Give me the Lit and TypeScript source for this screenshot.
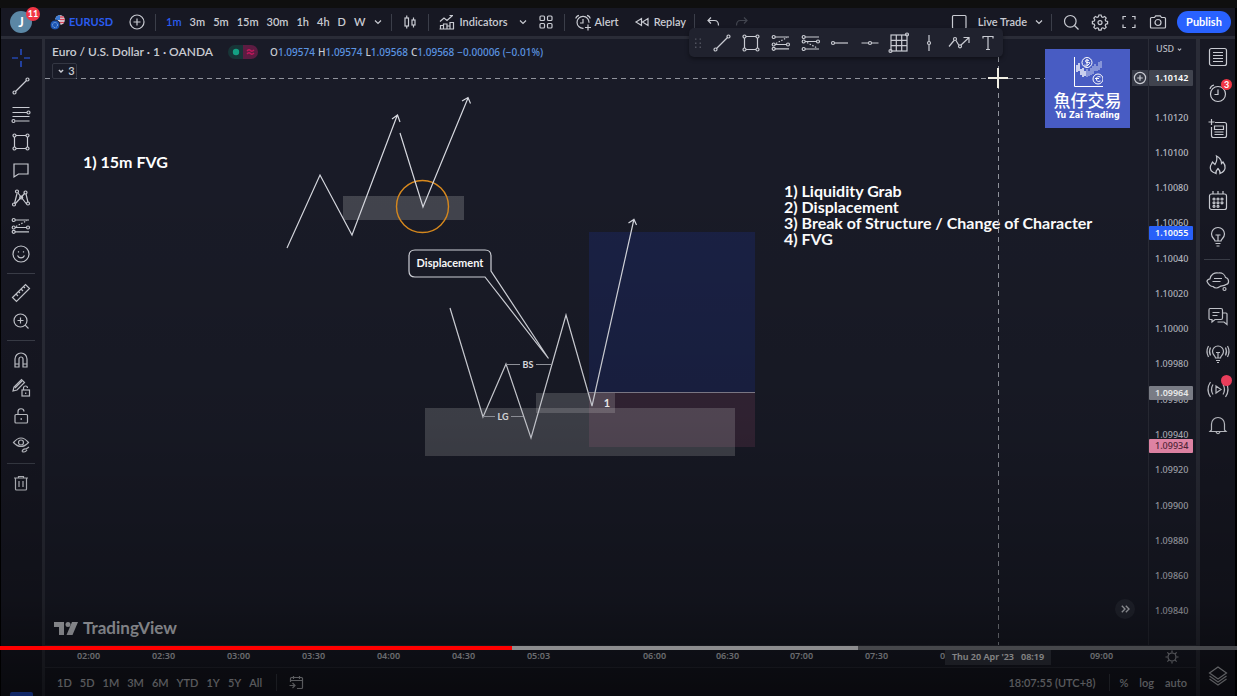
import { LitElement, html, css, svg, nothing } from "lit";
import type { SVGTemplateResult } from "lit";
import { classMap } from "lit/directives/class-map.js";

const dot = (x: number, y: number, r = 1.5) => svg`<circle cx=${x} cy=${y} r=${r} />`;

const ICONS: Record<string, SVGTemplateResult> = {
  addCircle: svg`<circle cx="10" cy="10" r="7"/><path d="M10 6.5v7M6.5 10h7"/>`,
  chevron: svg`<path d="M7 8.5l3 3 3-3"/>`,
  candles: svg`<rect x="5" y="6" width="3.5" height="8"/><path d="M6.75 3.5V6M6.75 14v2.5"/><rect x="12" y="8" width="3" height="5"/><path d="M13.5 5.500V8M13.5 13v2.500"/>`,
  indicators: svg`<path d="M3.500 17v-3.500h3V17M6.500 17v-5h3.500v5M10 17v-3h3V17M13 17v-6.500h3.500V17M2.500 17H17M3 9.500l4-3.500 3 2.500 5.500-5M12.500 3.500h3.500"/>`,
  grid: svg`<rect x="4" y="4" width="4.500" height="4.500" rx="1"/><rect x="11.500" y="4" width="4.500" height="4.500" rx="1"/><rect x="4" y="11.500" width="4.500" height="4.500" rx="1"/><rect x="11.500" y="11.500" width="4.500" height="4.500" rx="1"/>`,
  alert: svg`<path d="M10.500 16.300A6 6 0 1 1 16 10.800M10 7v4H7M2.800 6.500A4 4 0 0 1 6 3.300M14 3.300a4 4 0 0 1 3.200 3.200M15 12.500v6M12 15.500h6"/>`,
  replay: svg`<path d="M9.500 6.500v7L4 10zM16 6.500v7L10.500 10z"/>`,
  undo: svg`<path d="M8 5.500L5 8.500l3 3M5 8.500h6.500q4 0 4 5"/>`,
  redo: svg`<path d="M12 5.500l3 3-3 3M15 8.500H8.500q-4 0-4 5"/>`,
  square: svg`<rect x="3.500" y="3.500" width="13.500" height="13" rx="1"/>`,
  search: svg`<circle cx="9.300" cy="9.300" r="5.800"/><path d="M13.500 13.500l4 4"/>`,
  gear: svg`<path d="M8.900 3h2.200l.5 1.900 1.300.5 1.700-1 1.600 1.600-1 1.700.5 1.300 1.900.5v2.200l-1.900.5-.5 1.300 1 1.700-1.600 1.600-1.700-1-1.300.5-.5 1.900H8.900l-.5-1.900-1.300-.5-1.700 1-1.600-1.600 1-1.700-.5-1.300-1.900-.5V9.500L4.300 9l.5-1.300-1-1.700 1.600-1.600 1.700 1 1.300-.5z"/><circle cx="10" cy="10.600" r="2"/>`,
  fullscreen: svg`<path d="M4 7.500V4.500h3M13 4.500h3v3M16 12.500v3h-3M7 15.500H4v-3"/>`,
  camera: svg`<path d="M3.500 5.500h3l1.200-1.700h4.600l1.200 1.700h3q1 0 1 1v8.500q0 1-1 1h-13q-1 0-1-1V6.500q0-1 1-1z"/><circle cx="10" cy="10.500" r="3"/>`,
  cross: svg`<path d="M10 1v6M10 13v6M1 10h6M13 10h6"/>`,
  line: svg`<path d="M4.500 15.500l11-11"/>${dot(3.5, 16.5)}${dot(16.5, 3.5)}`,
  fib: svg`<path d="M1.500 3.500h17M1.500 8.500h14.500M1.500 12.500h17M4.500 17h14"/>${dot(17.5, 8.5)}${dot(2.5, 17)}`,
  rect: svg`<path d="M5 3.500h10M5 16.500h10M3.500 5v10M16.500 5v10"/>${dot(3.5, 3.5)}${dot(16.5, 3.5)}${dot(3.5, 16.5)}${dot(16.5, 16.5)}`,
  note: svg`<path d="M3 4h14v10H7.500L3 17z"/>`,
  pattern: svg`<path d="M3.500 15.500L6 5.500M7 5l8.500 11M4.500 15.500l9.500-10.500M15 6l2 8.500"/>${dot(3, 16.5)}${dot(6, 3.5)}${dot(10.2, 9.5)}${dot(14.5, 4.5)}${dot(17, 15.5)}`,
  forecast: svg`<path d="M4 4h14M4 11.500h12M4 15.800h14"/><path stroke-dasharray="1.500 1.500" d="M5 10.500l11-6"/>${dot(2.7, 4)}${dot(2.7, 11.5)}${dot(17, 11.5)}${dot(2.7, 15.8)}`,
  forecastDown: svg`<path d="M4 4h14M4 8.500h12M4 16h14"/><path stroke-dasharray="1.500 1.500" d="M6 9.500l10 5.500"/>${dot(2.7, 4)}${dot(2.7, 8.5)}${dot(17, 8.5)}${dot(2.7, 16)}`,
  smile: svg`<circle cx="10" cy="10" r="8"/><path d="M6.500 11.500a3.800 3.800 0 0 0 7 0M7.500 7.300v1.200M12.500 7.300v1.200"/>`,
  ruler: svg`<path d="M1.500 14.500l13-13 4 4-13 13zM5 11l2 2M7.500 8.500l1.500 1.500M10 6l2 2M12.500 3.500L14 5"/>`,
  zoomIn: svg`<circle cx="9.500" cy="9.500" r="6.500"/><path d="M14.200 14.200l3.300 3.300M9.500 6.500v6M6.500 9.500h6"/>`,
  magnet: svg`<path d="M4 17V9a6 6 0 0 1 12 0v8h-4V9a2 2 0 0 0-4 0v8zM4 14h4M12 14h4"/>`,
  pencilLock: svg`<path d="M2 13l1-4 7.500-7.500 3 3L6 12zM4 10l7-7"/><rect x="11" y="12" width="7.500" height="6"/><path d="M12.500 12V10a2 2 0 0 1 4 0M14.700 14.500v1.500"/>`,
  unlock: svg`<rect x="4" y="8.500" width="12.500" height="8.500" rx="1"/><path d="M7 8.500V6a3 3 0 0 1 6 -.5M10.200 12v2"/>`,
  eye: svg`<path d="M2.500 8.500Q10-.5 17.500 8.500 10 16.500 2.500 8.500z"/><circle cx="10" cy="8.500" r="2.500"/><path d="M11 17.500q1-3 4-2.500l3-2M11 17.500q3 1.500 5-1.500"/>`,
  trash: svg`<path d="M3 5h14M7.500 5V3.500h5V5M4.500 5v11q0 1 1 1h9q1 0 1-1V5M8 8v6M12 8v6"/>`,
  watchlist: svg`<rect x="1.500" y="1.500" width="17" height="17" rx="2"/><path d="M5 5.500h10M5 8.500h10M5 11.500h10M5 14.500h10"/>`,
  clock: svg`<circle cx="10" cy="11" r="7.500"/><path d="M10 6.500V11.500H6.500M2 6a5 5 0 0 1 4-4M14 2a5 5 0 0 1 4 4"/>`,
  dataWindow: svg`<path d="M7 3.500h9.500q2 0 2 2v11q0 2-2 2h-11q-2 0-2-2V8M3.500 0v6M.5 3h6"/><path d="M6.500 7h9v3.500h-9zM6.500 13h9M6.500 15.500h9"/>`,
  flame: svg`<path d="M8 18.500C3.500 17 1.500 14 2.500 11 3 9.500 4 8.500 4.500 7l2.500 2.500C8.500 7 9.500 4.500 8.500 1c4 2 5 5 5 7.500l1.500-1.500c3 3.500 3.500 9-3 11.500.5-2-.5-3.500-2-5-1.500 1.500-2.500 3-2 5z"/>`,
  calendar: svg`<rect x="1.500" y="3" width="17" height="15.500" rx="2"/><path d="M5 0v3M10 0v3M15 0v3"/>${[8, 11.8, 15.3].map(y => [6, 10, 14].map(x => (x === 14 && y > 15 ? nothing : dot(x, y, 1))))}`,
  bulb: svg`<path d="M7 14c0-2-3.500-3-3.500-7a6.500 6.500 0 0 1 13 0c0 4-3.500 5-3.500 7zM7.500 16.500h5M8.500 19h3M7.500 8h5M10 8v6"/>`,
  cloud: svg`<path d="M5 15.500C1.500 15.500 0 12.500-1 10.500c0-1.500 2-2.500 3-2.700C2.500 4 6.500 1 10.500 2c4-.5 6.500 2 7 4.500 4 1 4 6.500.5 7-2 2-5 1-6 2-2 1.500-5 2-7 0zM6 7.500h8M4.500 10.500h8"/>${dot(16.5, 18)}`,
  chat: svg`<path d="M2 1.500h11q1.500 0 1.500 1.500v8q0 1.500-1.500 1.500H7l-3 2.500v-2.500H2Q1 12.500 1 11V3q0-1.500 1-1.500zM4.500 5.500h7M4.500 8.500h5M14.500 6H18q1 0 1 1v10.500l-3-2.500H9.500"/>`,
  bulbLive: svg`<path d="M7.500 15c0-2-3-3-3-6.500a5.500 5.500 0 0 1 11 0c0 3.500-3 4.500-3 6.500zM8 17.500h4M9 19.500h2M8 9.500h4M10 9.500V15M2.500 4.500q-2 4 0 8M.5 3q-3 5.500 0 11M17.500 4.500q2 4 0 8M19.500 3q3 5.500 0 11"/>`,
  stream: svg`<path d="M8 7l5 3.500-5 3.500zM5 5.500q-3 5 0 10M2.500 3q-5 7.500 0 15M15 5.500q3 5 0 10M17.500 3q5 7.500 0 15"/>`,
  bell: svg`<path d="M3.500 15V9a6.500 6.500 0 0 1 13 0v6l1.500 1.500H2zM8 17q2 3.500 4 0"/>`,
  layers: svg`<path d="M10 1l8.500 6-8.500 6-8.500-6zM1.500 10l8.500 6 8.500-6M1.500 13l8.500 6 8.500-6"/>`,
  ray: svg`<path d="M4.500 10H18"/>${dot(3, 10)}`,
  hline: svg`<path d="M1.500 10H8.500M11.500 10H18.500"/>${dot(10, 10)}`,
  mesh: svg`<rect x="2" y="2" width="16" height="16"/><path d="M7.300 2v16M12.700 2v16M2 7.300h16M2 12.700h16"/>${dot(18, 1.5)}${dot(1.5, 18)}`,
  vline: svg`<path d="M10 2v6.500M10 11.500V18"/>${dot(10, 10)}`,
  zigzag: svg`<path d="M0 13.500l5-6M7 7.500L9.700 12M12 12l7.500-7M14.500 4.500h5.500v5.500"/>${dot(6, 6)}${dot(11, 13.3)}`,
  text: svg`<path d="M5 5.500V3.500h10v2M10 3.500v13M8 16.500h4"/>`,
  grip: svg`<path stroke-width="1.500" stroke-dasharray="1.500 3" d="M7.500 5v11M12.500 5v11"/>`,
  goto: svg`<path d="M4.500 9V5.500q0-1 1-1h10q1 0 1 1v9q0 1-1 1H11M4.500 7.500h12M7.500 3v3M13.500 3v3M3.500 12.500h5M6.500 10l2.500 2.500L6.500 15"/>`,
  sun: svg`<circle cx="10" cy="10" r="4"/><path d="M10 3.500v2M10 14.500v2M3.500 10h2M14.500 10h2M5.400 5.400l1.400 1.400M13.200 13.200l1.400 1.400M14.600 5.400l-1.400 1.400M6.800 13.200l-1.400 1.400"/>`,
  forward: svg`<path stroke-width="1.700" d="M6 6L10 10l-4 4M11 6l4 4-4 4"/>`,
};

const icon = (name: string) =>
  html`<svg class="icon" viewBox="0 0 20 20" aria-hidden="true">${ICONS[name]}</svg>`;

const INTERVALS = ["1m", "3m", "5m", "15m", "30m", "1h", "4h", "D", "W"];
const RANGES = ["1D", "5D", "1M", "3M", "6M", "YTD", "1Y", "5Y", "All"];
const OHLC = [["O", "1.09574"], ["H", "1.09574"], ["L", "1.09568"], ["C", "1.09568"]];
const FAVORITES = ["line", "rect", "forecast", "forecastDown", "ray", "hline", "mesh", "vline", "zigzag", "text"];
const DRAW_TOOLS = ["cross", "line", "fib", "rect", "note", "pattern", "forecast", "smile", "|", "ruler", "zoomIn", "|", "magnet", "pencilLock", "unlock", "eye", "|", "trash"];
const WIDGETS = ["watchlist", "clock", "dataWindow", "flame", "calendar", "bulb", "|", "cloud", "chat", "bulbLive", "stream", "bell"];
const PRICES = Array.from({ length: 15 }, (_, i) => (1.1012 - i * 0.0002).toFixed(5));
const TAGS = [
  { price: "1.10142", y: 39, kind: "cursor" },
  { price: "1.10055", y: 194, kind: "target" },
  { price: "1.09964", y: 354, kind: "entry" },
  { price: "1.09934", y: 407, kind: "stop" },
];
const TIMES_LEFT = ["02:00", "02:30", "03:00", "03:30", "04:00", "04:30", "05:03"];
const TIMES_RIGHT = ["06:00", "06:30", "07:00", "07:30", "08:00", "", "09:00"];
const CHECKLIST = ["1) Liquidity Grab", "2) Displacement", "3) Break of Structure / Change of Character", "4) FVG"];

class AppRoot extends LitElement {
  static styles = css`
    :host {
      display: block;
      background: #000;
      color: #c9cbd2;
      font-family: Lato, "Liberation Sans", sans-serif;
      font-size: 11px;
      font-weight: 600;
      line-height: 16px;
    }
    * { box-sizing: border-box; }
    button {
      display: flex;
      align-items: center;
      justify-content: center;
      padding: 0;
      border: 0;
      background: none;
      color: inherit;
      font: inherit;
      white-space: nowrap;
      cursor: pointer;
    }
    .icon {
      display: block;
      flex: none;
      width: 20px;
      height: 20px;
      fill: none;
      stroke: currentColor;
      stroke-width: 1.2;
      overflow: visible;
    }
    .shell {
      position: relative;
      display: flex;
      flex-direction: column;
      height: 100vh;
      padding: 8px 2px 0 1px;
      background: #000;
      overflow: hidden;
    }
    .strip { position: absolute; inset: 0 0 auto 0; height: 8px; background: #0f0f0f; }
    .header {
      display: flex;
      align-items: center;
      flex: none;
      height: 31px;
      padding: 0 4px 0 9px;
      border-bottom: 3px solid #2a2c37;
      background: #171823;
    }
    .avatar {
      position: relative;
      width: 22px;
      height: 22px;
      border-radius: 50%;
      background: #5b87a5;
      color: #fff;
      font-size: 13px;
      font-weight: 700;
    }
    .badge {
      position: absolute;
      display: flex;
      align-items: center;
      justify-content: center;
      border-radius: 50%;
      background: #f23645;
      color: #fff;
      font-size: 9px;
      font-weight: 700;
      line-height: 12px;
    }
    .avatar .badge { top: -4px; right: -8px; width: 14px; height: 14px; }
    .symbol { gap: 4px; margin: 0 14px 0 18px; color: #2a5cf0; font-weight: 700; }
    .flags { width: 15px; height: 15px; }
    .rule { flex: none; width: 1px; height: 17px; margin: 0 8px; background: #3b3e49; }
    .intervals { display: flex; gap: 8px; padding-left: 2px; }
    .on { color: #2a5cf0; }
    .narrow { width: 10px; overflow: visible; }
    .label { gap: 2px; }
    .menu { margin-left: 10px; }
    .layouts { margin-left: 8px; }
    .replay { margin-left: 13px; }
    .redo { margin-left: 9px; color: #42454f; }
    .right { display: flex; align-items: center; gap: 9px; margin-left: auto; }
    .right .rule { margin: 0; }
    .right .menu { margin: 0 -2px; }
    .publish {
      width: 54px;
      height: 22px;
      border-radius: 11px;
      background: #2962ff;
      color: #fff;
      font-weight: 700;
    }
    .body { display: flex; flex: 1; min-height: 0; }
    .tools {
      flex: none;
      width: 44px;
      padding-top: 5px;
      border-right: 3px solid #2a2c37;
      background: #171823;
    }
    .tools button { width: 40px; height: 28px; }
    .tools hr { width: 28px; height: 1px; margin: 5px 0 5px 6px; border: 0; background: #3b3e49; }
    .widgets {
      display: flex;
      flex-direction: column;
      flex: none;
      width: 39px;
      border-left: 4px solid #2a2c37;
      background: #171823;
    }
    .widgets button { position: relative; width: 35px; height: 36px; }
    .widgets hr { width: 26px; height: 1px; margin: 4px 0 3px 4px; border: 0; background: #3b3e49; }
    .widgets .badge { top: 4px; right: 3px; width: 11px; height: 11px; }
    .widgets .live { background: #ff4363; }
    .widgets .layers { margin-top: auto; height: 40px; }
    .main { display: flex; flex-direction: column; flex: 1; min-width: 0; background: #191b27; }
    .upper { display: flex; flex: 1; min-height: 0; }
    .pane { position: relative; flex: 1; min-width: 0; overflow: hidden; }
    .drawings { position: absolute; inset: 0; width: 100%; height: 100%; fill: none; }
    .drawings .stroke { stroke: #d6d8df; stroke-width: 1.2; }
    .drawings .thin { stroke: #9a9ca5; }
    .drawings .dash { stroke: #9093 9c; stroke: #90939c; stroke-dasharray: 5 4; }
    .drawings .zone { fill: #fff; fill-opacity: 0.18; }
    .drawings .note { fill: #fff; font-size: 16px; font-weight: 700; }
    .drawings .small { fill: #fff; font-size: 11px; font-weight: 700; text-anchor: middle; }
    .drawings .tiny { fill: #e8e9ee; font-size: 9px; font-weight: 700; text-anchor: middle; }
    .legend { position: relative; padding: 4px 0 0 7px; }
    .legend-row { display: flex; align-items: center; height: 18px; white-space: nowrap; }
    .title { margin: 0; font-size: 12px; font-weight: 600; }
    .toggle {
      display: block;
      width: 30px;
      height: 14px;
      margin: 0 12px 0 15px;
      border-radius: 7px;
      background: linear-gradient(90deg, #173537 50%, #5d1c42 50%);
    }
    .ohlc { display: flex; gap: 3px; font-family: "Noto Sans", sans-serif; font-size: 10px; font-weight: 500; }
    .ohlc b { color: #5b94e0; font-weight: 500; }
    .collapse {
      width: 25px;
      height: 16px;
      margin-top: 2px;
      border: 1px solid #343743;
      border-radius: 2px;
      background: #191b27;
    }
    .collapse .icon { width: 14px; height: 14px; stroke-width: 2; }
    .brand {
      position: absolute;
      left: 9px;
      bottom: 7px;
      display: flex;
      align-items: center;
      gap: 5px;
      color: #d1d3da;
      font-size: 17px;
      font-weight: 700;
      line-height: 20px;
    }
    .brand svg { width: 24px; height: 13px; fill: currentColor; }
    .latest {
      position: absolute;
      right: 13px;
      bottom: 26px;
      width: 20px;
      height: 20px;
      border-radius: 50%;
      background: #272a36;
    }
    .latest .icon { width: 16px; height: 16px; }
    .channel {
      position: absolute;
      top: 10px;
      right: 18px;
      display: flex;
      flex-direction: column;
      align-items: center;
      width: 85px;
      height: 79px;
      padding-top: 7px;
      background: #485cc3;
      color: #fff;
    }
    .channel svg { width: 30px; height: 32px; fill: none; stroke: #fff; }
    .channel strong { font: 500 17px/23px "Noto Sans CJK TC", sans-serif; }
    .channel span { font: 700 8px/10px "DejaVu Sans", sans-serif; }
    .price-add {
      position: absolute;
      top: 31px;
      right: 0;
      width: 16px;
      height: 16px;
      background: #363945;
    }
    .price-add .icon { width: 16px; height: 16px; stroke-width: 1.5; }
    .prices {
      position: relative;
      display: flex;
      flex-direction: column;
      flex: none;
      width: 48px;
      padding-bottom: 16px;
      border-left: 1px solid #2a2c37;
      color: #b8bac2;
      font-family: "Noto Sans", sans-serif;
      font-size: 9px;
      font-weight: 500;
    }
    .currency { justify-content: flex-start; height: 20px; padding-left: 7px; }
    .currency .icon { width: 11px; height: 11px; stroke-width: 2; }
    .scale { display: flex; flex-direction: column; flex: 1; margin-top: 41px; }
    .scale span { display: flex; align-items: center; flex: 1; padding-left: 6px; }
    .tag {
      position: absolute;
      left: 0;
      width: 44px;
      height: 14px;
      padding-left: 6px;
      border-radius: 1px;
      color: #fff;
      font-weight: 600;
      line-height: 14px;
      transform: translateY(-50%);
    }
    .cursor { height: 16px; background: #40434e; line-height: 16px; }
    .target { background: #2962ff; }
    .entry { background: #858892; }
    .stop { background: #ff96bb; color: #5c2a40; font-weight: 500; }
    .times {
      position: relative;
      display: flex;
      flex: none;
      height: 22px;
      padding-left: 6px;
      border-top: 1px solid #2a2c37;
      font-family: "Noto Sans", sans-serif;
      font-size: 9px;
      line-height: 19px;
      text-align: center;
    }
    .times span { flex: none; width: 75px; }
    .times .short { width: 73px; }
    .times .gap { width: 42px; }
    .times .moment {
      position: absolute;
      top: 2px;
      right: 145px;
      width: 106px;
      height: 17px;
      background: #363945;
      color: #fff;
      line-height: 17px;
      white-space: pre;
    }
    .times button { width: 48px; margin-left: auto; color: #a3a5ad; }
    .footer {
      display: flex;
      align-items: center;
      flex: none;
      height: 29px;
      padding: 1px 9px 0 12px;
      border-top: 1px solid #2a2c37;
      background: #171823;
    }
    .ranges { display: flex; gap: 8px; }
    .footer .rule { margin: 0 9px 0 14px; }
    .footer .clock { margin-left: auto; }
    .modes { display: flex; gap: 11px; }
    .favorites {
      position: absolute;
      top: 28px;
      right: 234px;
      display: flex;
      width: 314px;
      height: 29px;
      border-radius: 5px;
      background: #20222e;
      box-shadow: 0 2px 4px #0006;
    }
    .favorites button { flex: 1; }
    .favorites .handle { flex: none; width: 18px; color: #555863; }
    .handle .icon { width: 18px; height: 18px; }
    .dock {
      position: absolute;
      left: 10px;
      bottom: 0;
      width: 23px;
      height: 4px;
      border-radius: 2px 2px 0 0;
      background: #2962ff;
    }
    .shade {
      position: absolute;
      inset: 0;
      background: linear-gradient(180deg, #0000 25%, #0000001a 60%, #0000004d 86%, #00000099 100%);
      pointer-events: none;
    }
    .player {
      position: absolute;
      right: 0;
      bottom: 46px;
      left: 0;
      height: 4px;
      background: #46474b;
    }
    .player div { position: absolute; inset: 0 auto 0 0; }
    .loaded { background: #8d8d8f; }
    .played { background: #f00; }
  `;

  private header() {
    return html`<header class="header">
      <button class="avatar" aria-label="Account">J<span class="badge">11</span></button>
      <button class="symbol">
        <svg class="flags" viewBox="0 0 15 15" aria-hidden="true">
          <circle cx="10" cy="5" r="4.800" fill="#dfe4ee" />
          <path d="M10 .2a4.800 4.800 0 0 0-4.800 4.800H10z" fill="#3b7bd6" />
          <path d="M10 2h3.800M10 4.500h4.800M6 7.500h8" stroke="#d6455a" stroke-width="1.300" />
          <circle cx="5" cy="10" r="5" fill="#1d57b5" stroke="#171823" />
          <circle cx="5" cy="10" r="2.500" fill="none" stroke="#9cc0ee" stroke-dasharray="1 1" />
        </svg>
        EURUSD
      </button>
      <button aria-label="Compare">${icon("addCircle")}</button>
      <i class="rule"></i>
      <nav class="intervals">
        ${INTERVALS.map((t) => html`<button class=${classMap({ on: t === "1m" })}>${t}</button>`)}
        <button class="narrow" aria-label="More intervals">${icon("chevron")}</button>
      </nav>
      <i class="rule"></i>
      <button aria-label="Chart type">${icon("candles")}</button>
      <i class="rule"></i>
      <button class="label">${icon("indicators")}Indicators</button>
      <button class="narrow menu" aria-label="Favorite indicators">${icon("chevron")}</button>
      <button class="layouts" aria-label="Templates">${icon("grid")}</button>
      <i class="rule"></i>
      <button class="label">${icon("alert")}Alert</button>
      <button class="label replay">${icon("replay")}Replay</button>
      <i class="rule"></i>
      <button aria-label="Undo">${icon("undo")}</button>
      <button class="redo" aria-label="Redo">${icon("redo")}</button>
      <div class="right">
        <button aria-label="Layout">${icon("square")}</button>
        <button>Live Trade</button>
        <button class="narrow menu" aria-label="Layouts">${icon("chevron")}</button>
        <i class="rule"></i>
        <button aria-label="Search">${icon("search")}</button>
        <button aria-label="Settings">${icon("gear")}</button>
        <button aria-label="Fullscreen">${icon("fullscreen")}</button>
        <button aria-label="Snapshot">${icon("camera")}</button>
        <button class="publish">Publish</button>
      </div>
    </header>`;
  }

  private drawings() {
    return html`<svg class="drawings">
      <g transform="translate(-45 -39)">
        <rect x="589" y="232" width="166" height="161" fill="#1a2144" />
        <rect x="589" y="393" width="166" height="54" fill="#342536" />
        <path d="M589 392.500h166" stroke="#868290" />
        <rect class="zone" x="343" y="196" width="121" height="24" />
        <rect class="zone" x="425" y="408" width="310" height="48" />
        <rect class="zone" x="536" y="393" width="79" height="20" />
        <circle cx="422.500" cy="206.500" r="26" stroke="#d98a1e" stroke-width="1.400" />
        <path class="stroke" d="M287 248l33-73 32 60 45-119M392 119l5.500-4 2.500 7" />
        <path class="stroke" d="M400 133l23 74 45-109M462 101l6-3.500 2.500 6" />
        <path class="stroke" d="M450 308l33 109 23-53 25 74 35-123 26 91 42-187M628.500 223l5.500-3.500 2.500 5.500" />
        <path class="stroke" d="M485 277h-70q-6 0-6-6v-15q0-6 6-6h70q6 0 6 6v15l57.500 87.500z" />
        <path class="thin" d="M506 364.500h14M536 364.500h15M483 416.500h12M511 416.500h12" />
        <text class="small" x="450" y="267">Displacement</text>
        <text class="tiny" x="528" y="368">BS</text>
        <text class="tiny" x="503" y="420">LG</text>
        <text class="small" x="607" y="407">1</text>
        <text class="note" x="83" y="168">1) 15m FVG</text>
        ${CHECKLIST.map((t, i) => svg`<text class="note" x="784" y=${197 + i * 16}>${t}</text>`)}
      </g>
      <path class="dash" d="M0 39.500H1103M953.500 0V606" />
      <path d="M943 39h20M953 29v20" stroke="#f1efe4" stroke-width="2" />
    </svg>`;
  }

  private pane() {
    return html`<section class="pane">
      ${this.drawings()}
      <div class="legend">
        <div class="legend-row">
          <h1 class="title">Euro / U.S. Dollar · 1 · OANDA</h1>
          <svg class="toggle" viewBox="0 0 30 14" aria-hidden="true">
            <circle cx="8" cy="7" r="3.200" fill="#14a083" />
            <path d="M19 6q2-2 3.500-.5t3.500-.5M19 9q2-2 3.500-.5t3.500-.5" fill="none" stroke="#c2185b" stroke-width="1.400" />
          </svg>
          <div class="ohlc">
            ${OHLC.map(([k, v]) => html`<span>${k}<b>${v}</b></span>`)}
            <b>−0.00006 (−0.01%)</b>
          </div>
        </div>
        <button class="collapse">${icon("chevron")}3</button>
      </div>
      <div class="brand">
        <svg viewBox="0 0 24 13" aria-hidden="true">
          <path d="M0 0h10v13H5V5H0zM18 0h6l-5.500 13h-6z" />
          <circle cx="14" cy="2.500" r="2.500" />
        </svg>
        TradingView
      </div>
      <button class="latest" aria-label="Scroll to latest bar">${icon("forward")}</button>
      <div class="channel">
        <svg viewBox="0 0 30 32" aria-hidden="true">
          <path d="M1.500 1v29.500H30" />
          <path d="M4 9v7M6 7v8M8 13v6M10 12v9M12 15v5" stroke-width="1.400" />
          <path d="M14 13v8M16 15v5M18 12v7M20 10v8M22 8v7M24 10v5M26 6v8M28 5v7" stroke-width=".7" />
          <circle cx="14" cy="6.500" r="5" fill="#485cc3" />
          <path d="M16 4.500q-3.500-1.500-3.500.5t3 1.500-.5 2.500-3-.5M14 3v7" />
          <circle cx="25" cy="23" r="5" fill="#485cc3" />
          <path d="M27.500 21q-4-1.500-4 2t4 2M22 22.500h4" />
        </svg>
        <strong>魚仔交易</strong>
        <span>Yu Zai Trading</span>
      </div>
      <button class="price-add" aria-label="Add at price">${icon("addCircle")}</button>
    </section>`;
  }

  render() {
    return html`<main class="shell">
      <div class="strip"></div>
      ${this.header()}
      <div class="body">
        <aside class="tools">
          ${DRAW_TOOLS.map((n) =>
            n === "|" ? html`<hr />` : html`<button class=${classMap({ on: n === "cross" })} aria-label=${n}>${icon(n)}</button>`
          )}
        </aside>
        <div class="main">
          <div class="upper">
            ${this.pane()}
            <div class="prices">
              <button class="currency">USD${icon("chevron")}</button>
              <div class="scale">${PRICES.map((p) => html`<span>${p}</span>`)}</div>
              ${TAGS.map((t) => html`<div class="tag ${t.kind}" style="top:${t.y}px">${t.price}</div>`)}
            </div>
          </div>
          <div class="times">
            ${TIMES_LEFT.map((t) => html`<span>${t}</span>`)}
            <span class="gap"></span>
            ${TIMES_RIGHT.map((t, i) => html`<span class=${classMap({ short: i < 2 })}>${t}</span>`)}
            <div class="moment">Thu 20 Apr '23   08:19</div>
            <button aria-label="Axis settings">${icon("sun")}</button>
          </div>
          <footer class="footer">
            <nav class="ranges">${RANGES.map((r) => html`<button>${r}</button>`)}</nav>
            <i class="rule"></i>
            <button aria-label="Go to date">${icon("goto")}</button>
            <button class="clock">18:07:55 (UTC+8)</button>
            <i class="rule"></i>
            <div class="modes"><button>%</button><button>log</button><button>auto</button></div>
          </footer>
        </div>
        <aside class="widgets">
          ${WIDGETS.map((n) =>
            n === "|"
              ? html`<hr />`
              : html`<button aria-label=${n}>
                  ${icon(n)}${n === "clock" ? html`<span class="badge">3</span>` : n === "stream" ? html`<span class="badge live"></span>` : nothing}
                </button>`
          )}
          <button class="layers" aria-label="Object tree">${icon("layers")}</button>
        </aside>
      </div>
      <div class="favorites">
        <button class="handle" aria-label="Move toolbar">${icon("grip")}</button>
        ${FAVORITES.map((n) => html`<button aria-label=${n}>${icon(n)}</button>`)}
      </div>
      <div class="dock"></div>
      <div class="shade"></div>
      <div class="player" role="progressbar" aria-label="Playback" aria-valuenow="41">
        <div class="loaded" style="width:69.4%"></div>
        <div class="played" style="width:41.4%"></div>
      </div>
    </main>`;
  }
}

customElements.define("app-root", AppRoot);
